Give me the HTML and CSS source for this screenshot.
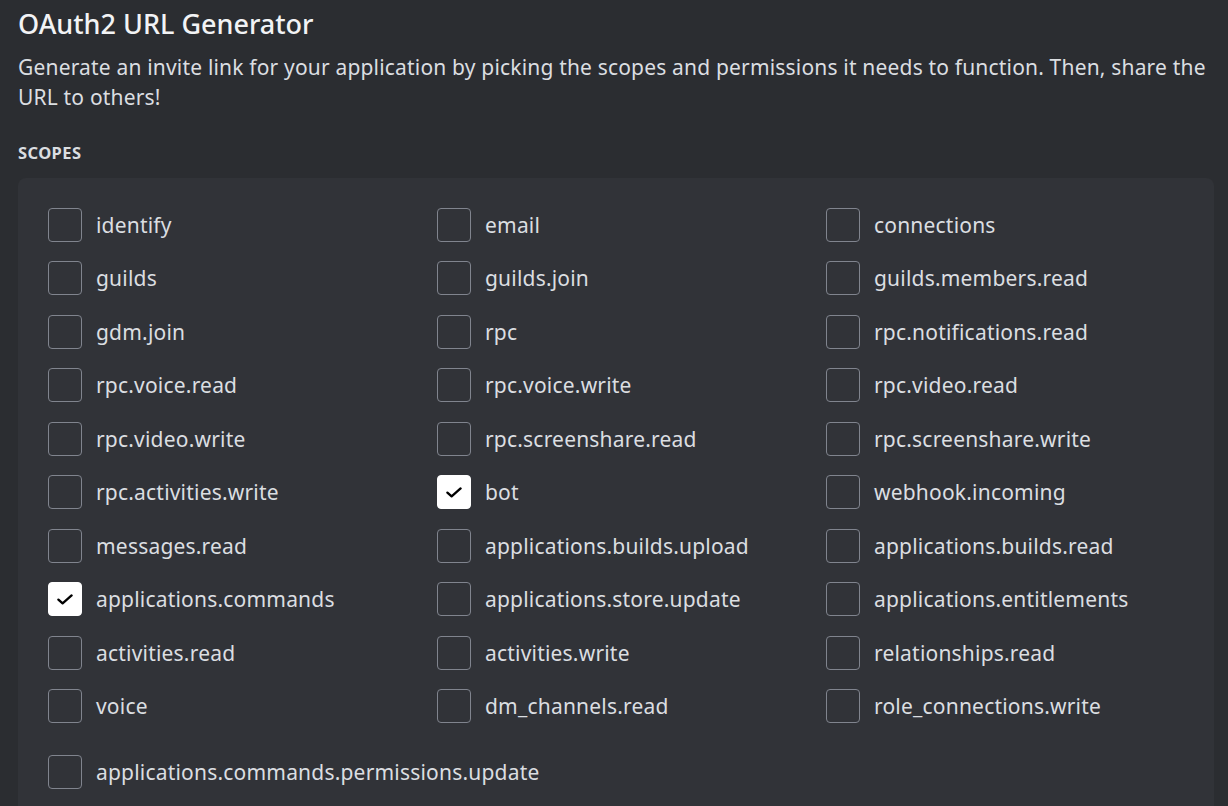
FILE: index.html
```html
<!DOCTYPE html>
<html>
<head>
<meta charset="utf-8">
<link rel="stylesheet" href="styles.css">
</head>
<body>
<div class="page">
  <h1 class="title">OAuth2 URL Generator</h1>
  <p class="desc">Generate an invite link for your application by picking the scopes and permissions it needs to function. Then, share the URL to others!</p>
  <div class="label">Scopes</div>
  <div class="panel">
    <div class="grid">
      <div class="item"><span class="box"></span><span class="text">identify</span></div>
      <div class="item"><span class="box"></span><span class="text">email</span></div>
      <div class="item"><span class="box"></span><span class="text">connections</span></div>
      <div class="item"><span class="box"></span><span class="text">guilds</span></div>
      <div class="item"><span class="box"></span><span class="text">guilds.join</span></div>
      <div class="item"><span class="box"></span><span class="text">guilds.members.read</span></div>
      <div class="item"><span class="box"></span><span class="text">gdm.join</span></div>
      <div class="item"><span class="box"></span><span class="text">rpc</span></div>
      <div class="item"><span class="box"></span><span class="text">rpc.notifications.read</span></div>
      <div class="item"><span class="box"></span><span class="text">rpc.voice.read</span></div>
      <div class="item"><span class="box"></span><span class="text">rpc.voice.write</span></div>
      <div class="item"><span class="box"></span><span class="text">rpc.video.read</span></div>
      <div class="item"><span class="box"></span><span class="text">rpc.video.write</span></div>
      <div class="item"><span class="box"></span><span class="text">rpc.screenshare.read</span></div>
      <div class="item"><span class="box"></span><span class="text">rpc.screenshare.write</span></div>
      <div class="item"><span class="box"></span><span class="text">rpc.activities.write</span></div>
      <div class="item"><span class="box checked"><svg class="check" viewBox="0 0 16 11" width="16" height="11"><path d="M1.4 5.6 L5.6 9.4 L14.6 1.4" fill="none" stroke="#000" stroke-width="2.3" stroke-linecap="round" stroke-linejoin="round"/></svg></span><span class="text">bot</span></div>
      <div class="item"><span class="box"></span><span class="text">webhook.incoming</span></div>
      <div class="item"><span class="box"></span><span class="text">messages.read</span></div>
      <div class="item"><span class="box"></span><span class="text">applications.builds.upload</span></div>
      <div class="item"><span class="box"></span><span class="text">applications.builds.read</span></div>
      <div class="item"><span class="box checked"><svg class="check" viewBox="0 0 16 11" width="16" height="11"><path d="M1.4 5.6 L5.6 9.4 L14.6 1.4" fill="none" stroke="#000" stroke-width="2.3" stroke-linecap="round" stroke-linejoin="round"/></svg></span><span class="text">applications.commands</span></div>
      <div class="item"><span class="box"></span><span class="text">applications.store.update</span></div>
      <div class="item"><span class="box"></span><span class="text">applications.entitlements</span></div>
      <div class="item"><span class="box"></span><span class="text">activities.read</span></div>
      <div class="item"><span class="box"></span><span class="text">activities.write</span></div>
      <div class="item"><span class="box"></span><span class="text">relationships.read</span></div>
      <div class="item"><span class="box"></span><span class="text">voice</span></div>
      <div class="item"><span class="box"></span><span class="text">dm_channels.read</span></div>
      <div class="item"><span class="box"></span><span class="text">role_connections.write</span></div>
    </div>
    <div class="item wide"><span class="box"></span><span class="text">applications.commands.permissions.update</span></div>
  </div>
</div>
</body>
</html>
```
FILE: styles.css
```css
html, body {
  margin: 0;
  padding: 0;
  background: #2b2d31;
  height: 100%;
  overflow: hidden;
}
body {
  font-family: "Noto Sans", "Open Sans", sans-serif;
  color: #dbdee1;
}
.page {
  padding: 0 14px 0 18px;
}
.title {
  margin: 0;
  padding-top: 6px;
  font-size: 27px;
  line-height: 36px;
  font-weight: 500;
  color: #f2f3f5;
}
.desc {
  margin: 10px 0 0 0;
  font-size: 21px;
  line-height: 30px;
  letter-spacing: 0.18px;
  color: #dbdee1;
}
.label {
  margin-top: 31px;
  font-size: 16.5px;
  line-height: 20px;
  font-weight: 700;
  letter-spacing: 0.4px;
  text-transform: uppercase;
  color: #dbdee1;
}
.panel {
  margin-top: 15px;
  background: #313338;
  border-radius: 8px;
  padding: 30px 30px 30px 30px;
  width: 1196px;
  box-sizing: border-box;
}
.grid {
  display: grid;
  grid-template-columns: repeat(3, 389px);
  row-gap: 19.45px;
}
.item {
  display: flex;
  align-items: center;
  gap: 14px;
  height: 34px;
}
.item.wide {
  margin-top: 32px;
}
.box {
  width: 34px;
  height: 34px;
  box-sizing: border-box;
  border: 1px solid #80848e;
  border-radius: 4px;
  flex: none;
  display: flex;
  align-items: center;
  justify-content: center;
}
.box.checked {
  background: #ffffff;
  border-color: #ffffff;
}
.check {
  display: block;
}
.text {
  font-size: 21px;
  line-height: 34px;
  letter-spacing: 0.2px;
  color: #dbdee1;
  white-space: nowrap;
}
```
